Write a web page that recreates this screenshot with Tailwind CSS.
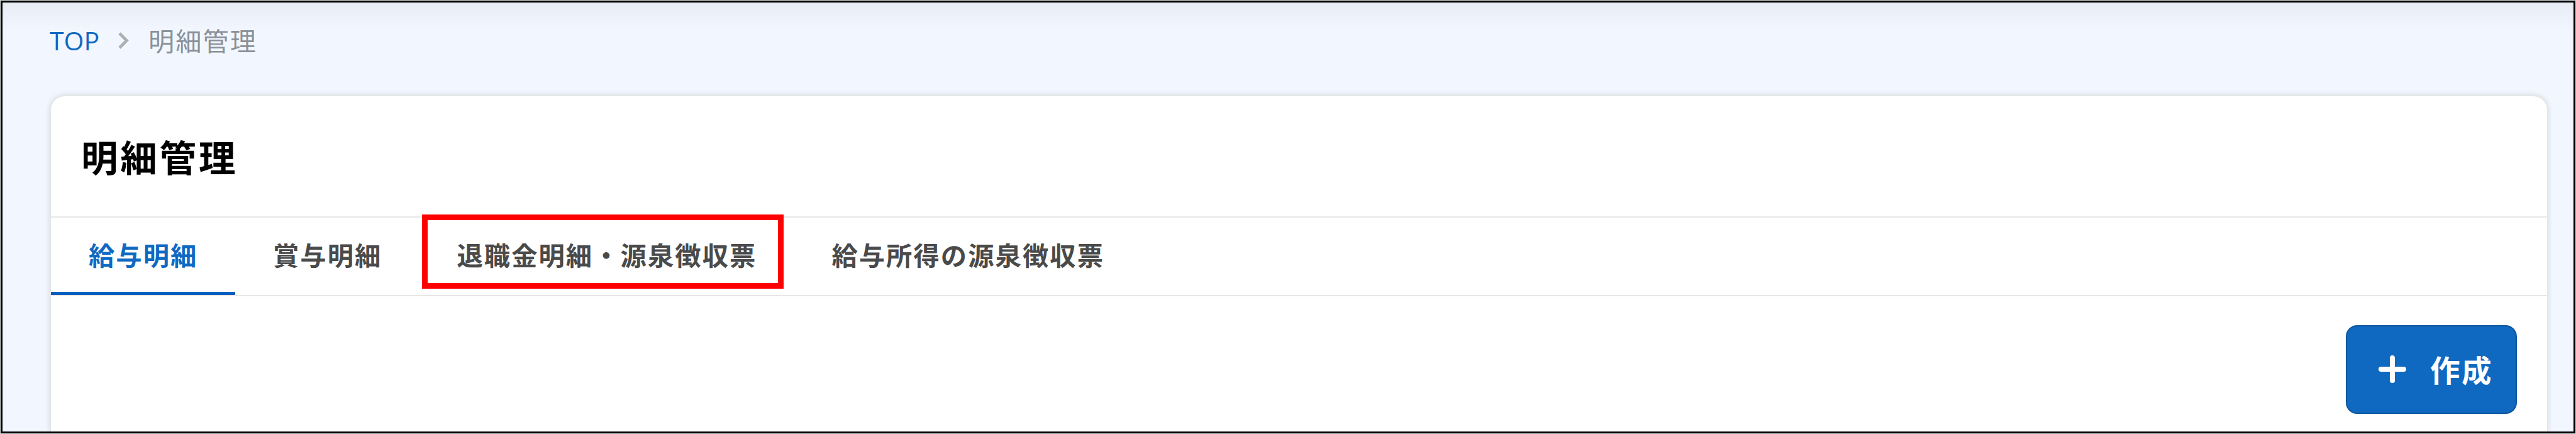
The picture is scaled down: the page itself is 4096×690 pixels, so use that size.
<!DOCTYPE html>
<html lang="ja">
<head>
  <meta charset="UTF-8">
  <meta name="viewport" content="width=device-width, initial-scale=1.0">
  <title>明細管理</title>
  <script src="https://cdn.jsdelivr.net/npm/@tailwindcss/browser@4"></script>
  <style>
    body { font-family: 'Noto Sans CJK JP', sans-serif; }
  </style>
</head>
<body class="bg-[#cfd6d6] p-px h-screen overflow-hidden">
  <div class="h-[688px] border-3 border-black bg-[#f2f7ff] bg-linear-to-b from-[#e8edf5] to-[#f2f7ff] to-[44px] pl-[75px] pr-10 flex flex-col overflow-hidden">

    <!-- パンくず -->
    <nav class="h-[147px] shrink-0 pt-[29px] flex items-start text-[41.2px] leading-[60px]">
      <a href="#" class="w-[109px] pt-px text-[41px] text-[#0f69c3] font-['Open_Sans']">TOP</a>
      <svg class="w-[17px] h-[27px] mt-[18px] mr-[31px]" viewBox="0 0 17 27" fill="none" stroke="#acaeb2" stroke-width="4.6">
        <path d="M2 2 L13.5 13.5 L2 25" />
      </svg>
      <span class="text-[#8b9198] tracking-[0.05em]">明細管理</span>
    </nav>

    <main class="grow w-[3973px] bg-white border-2 border-b-0 border-[#e5e7e8] rounded-t-[24px] shadow-[0_0_9px_rgba(0,0,0,0.12)]">
      <h1 class="h-[191px] pl-12 pb-0.5 flex items-center text-[58.5px] font-bold text-black tracking-[3.8px]">明細管理</h1>

      <!-- タブ -->
      <div class="h-[127px] border-y-2 border-[#e7e7e7] flex text-[41.3px] font-bold text-[#4a4a4a] tracking-[0.05em]">
        <a href="#" class="px-[60px] flex items-center text-[#0f69c3] border-b-5 border-[#0060c0]">給与明細</a>
        <a href="#" class="px-[59.5px] flex items-center border-b-5 border-transparent">賞与明細</a>
        <a href="#" class="relative px-[59.5px] flex items-center border-b-5 border-transparent">
          退職金明細・源泉徴収票
          <span class="absolute left-1 -top-[5px] w-[575px] h-[118px] border-9 border-[#ff0000]"></span>
        </a>
        <a href="#" class="px-[59.5px] flex items-center border-b-5 border-transparent">給与所得の源泉徴収票</a>
      </div>

      <div class="flex justify-end pt-[46px] pr-12">
        <button class="w-[272px] h-[141px] pl-[50px] pb-0.5 flex items-center bg-[#1069c1] border-2 border-[#0b559f] rounded-[18px] text-white text-[47.6px] font-bold tracking-[0.05em]">
          <svg class="w-11 h-11 mr-[38px]" viewBox="0 0 44 44" fill="none" stroke="currentColor" stroke-width="8" stroke-linecap="round">
            <path d="M22 4 V40 M4 22 H40" />
          </svg>
          <span>作成</span>
        </button>
      </div>
    </main>
  </div>
</body>
</html>
